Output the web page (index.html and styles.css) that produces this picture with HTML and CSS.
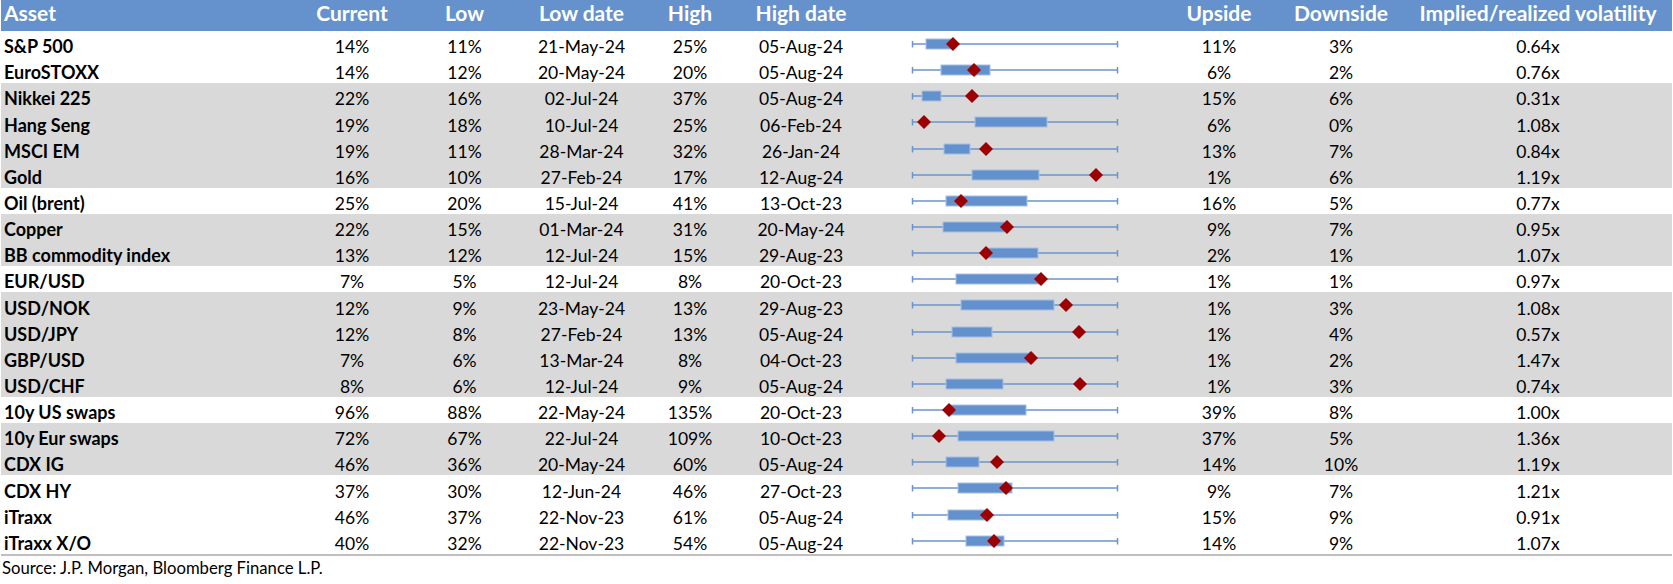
FILE: index.html
```html
<!DOCTYPE html>
<html lang="en">
<head>
<meta charset="utf-8">
<title>Volatility table</title>
<link rel="stylesheet" href="styles.css">
</head>
<body>
<div class="table">
  <div class="row head">
    <div class="c asset">Asset</div>
    <div class="c">Current</div>
    <div class="c">Low</div>
    <div class="c">Low date</div>
    <div class="c">High</div>
    <div class="c">High date</div>
    <div class="c chart"></div>
    <div class="c">Upside</div>
    <div class="c">Downside</div>
    <div class="c">Implied/realized volatility</div>
  </div>

  <div class="row">
    <div class="c asset">S&amp;P 500</div><div class="c">14%</div><div class="c">11%</div><div class="c">21-May-24</div><div class="c">25%</div><div class="c">05-Aug-24</div>
    <div class="c chart"><svg class="bw" width="220" height="26" viewBox="0 0 220 26"><line class="wl" x1="7" y1="13" x2="213" y2="13"/><line class="wl" x1="7.5" y1="10" x2="7.5" y2="16.5"/><line class="wl" x1="212.5" y1="10" x2="212.5" y2="16.5"/><rect class="bx" x="21" y="8" width="27" height="10"/><polygon class="dm" points="48,6 55,13 48,20 41,13"/></svg></div>
    <div class="c">11%</div><div class="c">3%</div><div class="c">0.64x</div>
  </div>

  <div class="row">
    <div class="c asset">EuroSTOXX</div><div class="c">14%</div><div class="c">12%</div><div class="c">20-May-24</div><div class="c">20%</div><div class="c">05-Aug-24</div>
    <div class="c chart"><svg class="bw" width="220" height="26" viewBox="0 0 220 26"><line class="wl" x1="7" y1="13" x2="213" y2="13"/><line class="wl" x1="7.5" y1="10" x2="7.5" y2="16.5"/><line class="wl" x1="212.5" y1="10" x2="212.5" y2="16.5"/><rect class="bx" x="36" y="8" width="49" height="10"/><polygon class="dm" points="69,6 76,13 69,20 62,13"/></svg></div>
    <div class="c">6%</div><div class="c">2%</div><div class="c">0.76x</div>
  </div>

  <div class="row alt">
    <div class="c asset">Nikkei 225</div><div class="c">22%</div><div class="c">16%</div><div class="c">02-Jul-24</div><div class="c">37%</div><div class="c">05-Aug-24</div>
    <div class="c chart"><svg class="bw" width="220" height="26" viewBox="0 0 220 26"><line class="wl" x1="7" y1="13" x2="213" y2="13"/><line class="wl" x1="7.5" y1="10" x2="7.5" y2="16.5"/><line class="wl" x1="212.5" y1="10" x2="212.5" y2="16.5"/><rect class="bx" x="17" y="8" width="19" height="10"/><polygon class="dm" points="67,6 74,13 67,20 60,13"/></svg></div>
    <div class="c">15%</div><div class="c">6%</div><div class="c">0.31x</div>
  </div>

  <div class="row alt">
    <div class="c asset">Hang Seng</div><div class="c">19%</div><div class="c">18%</div><div class="c">10-Jul-24</div><div class="c">25%</div><div class="c">06-Feb-24</div>
    <div class="c chart"><svg class="bw" width="220" height="26" viewBox="0 0 220 26"><line class="wl" x1="7" y1="13" x2="213" y2="13"/><line class="wl" x1="7.5" y1="10" x2="7.5" y2="16.5"/><line class="wl" x1="212.5" y1="10" x2="212.5" y2="16.5"/><rect class="bx" x="70" y="8" width="72" height="10"/><polygon class="dm" points="19,6 26,13 19,20 12,13"/></svg></div>
    <div class="c">6%</div><div class="c">0%</div><div class="c">1.08x</div>
  </div>

  <div class="row alt">
    <div class="c asset">MSCI EM</div><div class="c">19%</div><div class="c">11%</div><div class="c">28-Mar-24</div><div class="c">32%</div><div class="c">26-Jan-24</div>
    <div class="c chart"><svg class="bw" width="220" height="26" viewBox="0 0 220 26"><line class="wl" x1="7" y1="13" x2="213" y2="13"/><line class="wl" x1="7.5" y1="10" x2="7.5" y2="16.5"/><line class="wl" x1="212.5" y1="10" x2="212.5" y2="16.5"/><rect class="bx" x="39" y="8" width="26" height="10"/><polygon class="dm" points="81,6 88,13 81,20 74,13"/></svg></div>
    <div class="c">13%</div><div class="c">7%</div><div class="c">0.84x</div>
  </div>

  <div class="row alt">
    <div class="c asset">Gold</div><div class="c">16%</div><div class="c">10%</div><div class="c">27-Feb-24</div><div class="c">17%</div><div class="c">12-Aug-24</div>
    <div class="c chart"><svg class="bw" width="220" height="26" viewBox="0 0 220 26"><line class="wl" x1="7" y1="13" x2="213" y2="13"/><line class="wl" x1="7.5" y1="10" x2="7.5" y2="16.5"/><line class="wl" x1="212.5" y1="10" x2="212.5" y2="16.5"/><rect class="bx" x="67" y="8" width="67" height="10"/><polygon class="dm" points="191,6 198,13 191,20 184,13"/></svg></div>
    <div class="c">1%</div><div class="c">6%</div><div class="c">1.19x</div>
  </div>

  <div class="row">
    <div class="c asset">Oil (brent)</div><div class="c">25%</div><div class="c">20%</div><div class="c">15-Jul-24</div><div class="c">41%</div><div class="c">13-Oct-23</div>
    <div class="c chart"><svg class="bw" width="220" height="26" viewBox="0 0 220 26"><line class="wl" x1="7" y1="13" x2="213" y2="13"/><line class="wl" x1="7.5" y1="10" x2="7.5" y2="16.5"/><line class="wl" x1="212.5" y1="10" x2="212.5" y2="16.5"/><rect class="bx" x="41" y="8" width="81" height="10"/><polygon class="dm" points="56,6 63,13 56,20 49,13"/></svg></div>
    <div class="c">16%</div><div class="c">5%</div><div class="c">0.77x</div>
  </div>

  <div class="row alt">
    <div class="c asset">Copper</div><div class="c">22%</div><div class="c">15%</div><div class="c">01-Mar-24</div><div class="c">31%</div><div class="c">20-May-24</div>
    <div class="c chart"><svg class="bw" width="220" height="26" viewBox="0 0 220 26"><line class="wl" x1="7" y1="13" x2="213" y2="13"/><line class="wl" x1="7.5" y1="10" x2="7.5" y2="16.5"/><line class="wl" x1="212.5" y1="10" x2="212.5" y2="16.5"/><rect class="bx" x="38" y="8" width="64" height="10"/><polygon class="dm" points="102,6 109,13 102,20 95,13"/></svg></div>
    <div class="c">9%</div><div class="c">7%</div><div class="c">0.95x</div>
  </div>

  <div class="row alt">
    <div class="c asset">BB commodity index</div><div class="c">13%</div><div class="c">12%</div><div class="c">12-Jul-24</div><div class="c">15%</div><div class="c">29-Aug-23</div>
    <div class="c chart"><svg class="bw" width="220" height="26" viewBox="0 0 220 26"><line class="wl" x1="7" y1="13" x2="213" y2="13"/><line class="wl" x1="7.5" y1="10" x2="7.5" y2="16.5"/><line class="wl" x1="212.5" y1="10" x2="212.5" y2="16.5"/><rect class="bx" x="81" y="8" width="52" height="10"/><polygon class="dm" points="81,6 88,13 81,20 74,13"/></svg></div>
    <div class="c">2%</div><div class="c">1%</div><div class="c">1.07x</div>
  </div>

  <div class="row">
    <div class="c asset">EUR/USD</div><div class="c">7%</div><div class="c">5%</div><div class="c">12-Jul-24</div><div class="c">8%</div><div class="c">20-Oct-23</div>
    <div class="c chart"><svg class="bw" width="220" height="26" viewBox="0 0 220 26"><line class="wl" x1="7" y1="13" x2="213" y2="13"/><line class="wl" x1="7.5" y1="10" x2="7.5" y2="16.5"/><line class="wl" x1="212.5" y1="10" x2="212.5" y2="16.5"/><rect class="bx" x="51" y="8" width="85" height="10"/><polygon class="dm" points="136,6 143,13 136,20 129,13"/></svg></div>
    <div class="c">1%</div><div class="c">1%</div><div class="c">0.97x</div>
  </div>

  <div class="row alt">
    <div class="c asset">USD/NOK</div><div class="c">12%</div><div class="c">9%</div><div class="c">23-May-24</div><div class="c">13%</div><div class="c">29-Aug-23</div>
    <div class="c chart"><svg class="bw" width="220" height="26" viewBox="0 0 220 26"><line class="wl" x1="7" y1="13" x2="213" y2="13"/><line class="wl" x1="7.5" y1="10" x2="7.5" y2="16.5"/><line class="wl" x1="212.5" y1="10" x2="212.5" y2="16.5"/><rect class="bx" x="56" y="8" width="93" height="10"/><polygon class="dm" points="161,6 168,13 161,20 154,13"/></svg></div>
    <div class="c">1%</div><div class="c">3%</div><div class="c">1.08x</div>
  </div>

  <div class="row alt">
    <div class="c asset">USD/JPY</div><div class="c">12%</div><div class="c">8%</div><div class="c">27-Feb-24</div><div class="c">13%</div><div class="c">05-Aug-24</div>
    <div class="c chart"><svg class="bw" width="220" height="26" viewBox="0 0 220 26"><line class="wl" x1="7" y1="13" x2="213" y2="13"/><line class="wl" x1="7.5" y1="10" x2="7.5" y2="16.5"/><line class="wl" x1="212.5" y1="10" x2="212.5" y2="16.5"/><rect class="bx" x="47" y="8" width="40" height="10"/><polygon class="dm" points="174,6 181,13 174,20 167,13"/></svg></div>
    <div class="c">1%</div><div class="c">4%</div><div class="c">0.57x</div>
  </div>

  <div class="row alt">
    <div class="c asset">GBP/USD</div><div class="c">7%</div><div class="c">6%</div><div class="c">13-Mar-24</div><div class="c">8%</div><div class="c">04-Oct-23</div>
    <div class="c chart"><svg class="bw" width="220" height="26" viewBox="0 0 220 26"><line class="wl" x1="7" y1="13" x2="213" y2="13"/><line class="wl" x1="7.5" y1="10" x2="7.5" y2="16.5"/><line class="wl" x1="212.5" y1="10" x2="212.5" y2="16.5"/><rect class="bx" x="51" y="8" width="77" height="10"/><polygon class="dm" points="126,6 133,13 126,20 119,13"/></svg></div>
    <div class="c">1%</div><div class="c">2%</div><div class="c">1.47x</div>
  </div>

  <div class="row alt">
    <div class="c asset">USD/CHF</div><div class="c">8%</div><div class="c">6%</div><div class="c">12-Jul-24</div><div class="c">9%</div><div class="c">05-Aug-24</div>
    <div class="c chart"><svg class="bw" width="220" height="26" viewBox="0 0 220 26"><line class="wl" x1="7" y1="13" x2="213" y2="13"/><line class="wl" x1="7.5" y1="10" x2="7.5" y2="16.5"/><line class="wl" x1="212.5" y1="10" x2="212.5" y2="16.5"/><rect class="bx" x="41" y="8" width="57" height="10"/><polygon class="dm" points="175,6 182,13 175,20 168,13"/></svg></div>
    <div class="c">1%</div><div class="c">3%</div><div class="c">0.74x</div>
  </div>

  <div class="row">
    <div class="c asset">10y US swaps</div><div class="c">96%</div><div class="c">88%</div><div class="c">22-May-24</div><div class="c">135%</div><div class="c">20-Oct-23</div>
    <div class="c chart"><svg class="bw" width="220" height="26" viewBox="0 0 220 26"><line class="wl" x1="7" y1="13" x2="213" y2="13"/><line class="wl" x1="7.5" y1="10" x2="7.5" y2="16.5"/><line class="wl" x1="212.5" y1="10" x2="212.5" y2="16.5"/><rect class="bx" x="44" y="8" width="77" height="10"/><polygon class="dm" points="44,6 51,13 44,20 37,13"/></svg></div>
    <div class="c">39%</div><div class="c">8%</div><div class="c">1.00x</div>
  </div>

  <div class="row alt">
    <div class="c asset">10y Eur swaps</div><div class="c">72%</div><div class="c">67%</div><div class="c">22-Jul-24</div><div class="c">109%</div><div class="c">10-Oct-23</div>
    <div class="c chart"><svg class="bw" width="220" height="26" viewBox="0 0 220 26"><line class="wl" x1="7" y1="13" x2="213" y2="13"/><line class="wl" x1="7.5" y1="10" x2="7.5" y2="16.5"/><line class="wl" x1="212.5" y1="10" x2="212.5" y2="16.5"/><rect class="bx" x="53" y="8" width="96" height="10"/><polygon class="dm" points="34,6 41,13 34,20 27,13"/></svg></div>
    <div class="c">37%</div><div class="c">5%</div><div class="c">1.36x</div>
  </div>

  <div class="row alt">
    <div class="c asset">CDX IG</div><div class="c">46%</div><div class="c">36%</div><div class="c">20-May-24</div><div class="c">60%</div><div class="c">05-Aug-24</div>
    <div class="c chart"><svg class="bw" width="220" height="26" viewBox="0 0 220 26"><line class="wl" x1="7" y1="13" x2="213" y2="13"/><line class="wl" x1="7.5" y1="10" x2="7.5" y2="16.5"/><line class="wl" x1="212.5" y1="10" x2="212.5" y2="16.5"/><rect class="bx" x="41" y="8" width="33" height="10"/><polygon class="dm" points="92,6 99,13 92,20 85,13"/></svg></div>
    <div class="c">14%</div><div class="c">10%</div><div class="c">1.19x</div>
  </div>

  <div class="row">
    <div class="c asset">CDX HY</div><div class="c">37%</div><div class="c">30%</div><div class="c">12-Jun-24</div><div class="c">46%</div><div class="c">27-Oct-23</div>
    <div class="c chart"><svg class="bw" width="220" height="26" viewBox="0 0 220 26"><line class="wl" x1="7" y1="13" x2="213" y2="13"/><line class="wl" x1="7.5" y1="10" x2="7.5" y2="16.5"/><line class="wl" x1="212.5" y1="10" x2="212.5" y2="16.5"/><rect class="bx" x="53" y="8" width="54" height="10"/><polygon class="dm" points="101,6 108,13 101,20 94,13"/></svg></div>
    <div class="c">9%</div><div class="c">7%</div><div class="c">1.21x</div>
  </div>

  <div class="row">
    <div class="c asset">iTraxx</div><div class="c">46%</div><div class="c">37%</div><div class="c">22-Nov-23</div><div class="c">61%</div><div class="c">05-Aug-24</div>
    <div class="c chart"><svg class="bw" width="220" height="26" viewBox="0 0 220 26"><line class="wl" x1="7" y1="13" x2="213" y2="13"/><line class="wl" x1="7.5" y1="10" x2="7.5" y2="16.5"/><line class="wl" x1="212.5" y1="10" x2="212.5" y2="16.5"/><rect class="bx" x="43" y="8" width="39" height="10"/><polygon class="dm" points="82,6 89,13 82,20 75,13"/></svg></div>
    <div class="c">15%</div><div class="c">9%</div><div class="c">0.91x</div>
  </div>

  <div class="row">
    <div class="c asset">iTraxx X/O</div><div class="c">40%</div><div class="c">32%</div><div class="c">22-Nov-23</div><div class="c">54%</div><div class="c">05-Aug-24</div>
    <div class="c chart"><svg class="bw" width="220" height="26" viewBox="0 0 220 26"><line class="wl" x1="7" y1="13" x2="213" y2="13"/><line class="wl" x1="7.5" y1="10" x2="7.5" y2="16.5"/><line class="wl" x1="212.5" y1="10" x2="212.5" y2="16.5"/><rect class="bx" x="61" y="8" width="38" height="10"/><polygon class="dm" points="89,6 96,13 89,20 82,13"/></svg></div>
    <div class="c">14%</div><div class="c">9%</div><div class="c">1.07x</div>
  </div>
</div>
<p class="source">Source: J.P. Morgan, Bloomberg Finance L.P.</p>
</body>
</html>
```

FILE: styles.css
```css
html, body {
  margin: 0;
  padding: 0;
  background: #ffffff;
}

body {
  width: 1673px;
  font-family: Lato, "Liberation Sans", sans-serif;
  color: #000000;
}

.table {
  margin-left: 1px;
  width: 1671px;
  border-bottom: 2px solid #bfbfbf;
}

.row {
  display: grid;
  grid-template-columns: 299px 104px 121px 113px 104px 118px 300px 118px 126px 268px;
  height: 26.15px;
  align-items: end;
  font-size: 17.5px;
  line-height: 21px;
}

.row.alt {
  background: #d9d9d9;
}

.row.head {
  height: 31px;
  background: #6592cc;
  color: #ffffff;
  font-weight: 700;
  font-size: 21px;
  line-height: 24px;
  align-items: start;
  padding-top: 1px;
  box-sizing: border-box;
}

.c {
  text-align: center;
  white-space: nowrap;
}

.c.asset {
  text-align: left;
  padding-left: 3px;
  font-weight: 700;
  font-size: 18px;
}

.row.head .c.asset {
  font-size: 21px;
}

.c.chart {
  padding-left: 45px;
  height: 26px;
  align-self: start;
}

.bw {
  display: block;
}

.wl {
  stroke: #6a94cd;
  stroke-width: 1.5;
}

.bx {
  fill: #6291ce;
  stroke: #a6c0e4;
  stroke-width: 1;
}

.dm {
  fill: #9c0000;
}

.source {
  margin: 0;
  padding: 2px 0 0 2px;
  font-size: 16.7px;
  line-height: 20px;
}
```
